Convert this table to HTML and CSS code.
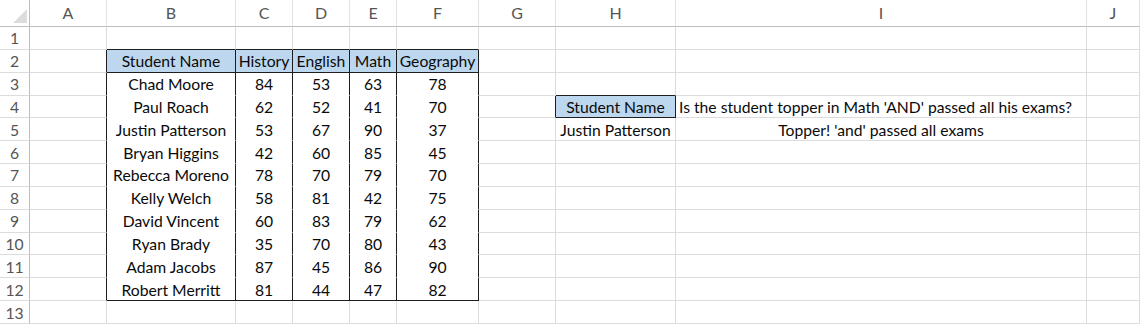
FILE: index.html
```html
<!DOCTYPE html>
<html>
<head>
<meta charset="utf-8">
<link rel="stylesheet" href="styles.css">
</head>
<body>
<div class="sheet">
  <!-- header row -->
  <div class="c ch corner"><span class="tri"></span></div>
  <div class="c ch">A</div>
  <div class="c ch">B</div>
  <div class="c ch">C</div>
  <div class="c ch">D</div>
  <div class="c ch">E</div>
  <div class="c ch">F</div>
  <div class="c ch">G</div>
  <div class="c ch">H</div>
  <div class="c ch">I</div>
  <div class="c ch">J</div>

  <!-- row 1 -->
  <div class="c rh">1</div>
  <div class="c"></div>
  <div class="c bt"></div>
  <div class="c bt"></div>
  <div class="c bt"></div>
  <div class="c bt"></div>
  <div class="c bt"></div>
  <div class="c"></div>
  <div class="c"></div>
  <div class="c"></div>
  <div class="c"></div>

  <!-- row 2 -->
  <div class="c rh">2</div>
  <div class="c br"></div>
  <div class="c br bt hd">Student Name</div>
  <div class="c br bt hd">History</div>
  <div class="c br bt hd">English</div>
  <div class="c br bt hd">Math</div>
  <div class="c br bt hd">Geography</div>
  <div class="c"></div>
  <div class="c"></div>
  <div class="c"></div>
  <div class="c"></div>

  <!-- row 3 -->
  <div class="c rh">3</div>
  <div class="c br"></div>
  <div class="c br nb">Chad Moore</div>
  <div class="c br nb">84</div>
  <div class="c br nb">53</div>
  <div class="c br nb">63</div>
  <div class="c br nb">78</div>
  <div class="c"></div>
  <div class="c bt"></div>
  <div class="c"></div>
  <div class="c"></div>

  <!-- row 4 -->
  <div class="c rh">4</div>
  <div class="c br"></div>
  <div class="c br nb">Paul Roach</div>
  <div class="c br nb">62</div>
  <div class="c br nb">52</div>
  <div class="c br nb">41</div>
  <div class="c br nb">70</div>
  <div class="c br"></div>
  <div class="c br bt hd">Student Name</div>
  <div class="c left">Is the student topper in Math 'AND' passed all his exams?</div>
  <div class="c"></div>

  <!-- row 5 -->
  <div class="c rh">5</div>
  <div class="c br"></div>
  <div class="c br nb">Justin Patterson</div>
  <div class="c br nb">53</div>
  <div class="c br nb">67</div>
  <div class="c br nb">90</div>
  <div class="c br nb">37</div>
  <div class="c"></div>
  <div class="c">Justin Patterson</div>
  <div class="c">Topper! 'and' passed all exams</div>
  <div class="c"></div>

  <!-- row 6 -->
  <div class="c rh">6</div>
  <div class="c br"></div>
  <div class="c br nb">Bryan Higgins</div>
  <div class="c br nb">42</div>
  <div class="c br nb">60</div>
  <div class="c br nb">85</div>
  <div class="c br nb">45</div>
  <div class="c"></div>
  <div class="c"></div>
  <div class="c"></div>
  <div class="c"></div>

  <!-- row 7 -->
  <div class="c rh">7</div>
  <div class="c br"></div>
  <div class="c br nb">Rebecca Moreno</div>
  <div class="c br nb">78</div>
  <div class="c br nb">70</div>
  <div class="c br nb">79</div>
  <div class="c br nb">70</div>
  <div class="c"></div>
  <div class="c"></div>
  <div class="c"></div>
  <div class="c"></div>

  <!-- row 8 -->
  <div class="c rh">8</div>
  <div class="c br"></div>
  <div class="c br nb">Kelly Welch</div>
  <div class="c br nb">58</div>
  <div class="c br nb">81</div>
  <div class="c br nb">42</div>
  <div class="c br nb">75</div>
  <div class="c"></div>
  <div class="c"></div>
  <div class="c"></div>
  <div class="c"></div>

  <!-- row 9 -->
  <div class="c rh">9</div>
  <div class="c br"></div>
  <div class="c br nb">David Vincent</div>
  <div class="c br nb">60</div>
  <div class="c br nb">83</div>
  <div class="c br nb">79</div>
  <div class="c br nb">62</div>
  <div class="c"></div>
  <div class="c"></div>
  <div class="c"></div>
  <div class="c"></div>

  <!-- row 10 -->
  <div class="c rh">10</div>
  <div class="c br"></div>
  <div class="c br nb">Ryan Brady</div>
  <div class="c br nb">35</div>
  <div class="c br nb">70</div>
  <div class="c br nb">80</div>
  <div class="c br nb">43</div>
  <div class="c"></div>
  <div class="c"></div>
  <div class="c"></div>
  <div class="c"></div>

  <!-- row 11 -->
  <div class="c rh">11</div>
  <div class="c br"></div>
  <div class="c br nb">Adam Jacobs</div>
  <div class="c br nb">87</div>
  <div class="c br nb">45</div>
  <div class="c br nb">86</div>
  <div class="c br nb">90</div>
  <div class="c"></div>
  <div class="c"></div>
  <div class="c"></div>
  <div class="c"></div>

  <!-- row 12 -->
  <div class="c rh">12</div>
  <div class="c br"></div>
  <div class="c br bt">Robert Merritt</div>
  <div class="c br bt">81</div>
  <div class="c br bt">44</div>
  <div class="c br bt">47</div>
  <div class="c br bt">82</div>
  <div class="c"></div>
  <div class="c"></div>
  <div class="c"></div>
  <div class="c"></div>

  <!-- row 13 -->
  <div class="c rh">13</div>
  <div class="c"></div>
  <div class="c"></div>
  <div class="c"></div>
  <div class="c"></div>
  <div class="c"></div>
  <div class="c"></div>
  <div class="c"></div>
  <div class="c"></div>
  <div class="c"></div>
  <div class="c"></div>
</div>
</body>
</html>
```

FILE: styles.css
```css
html, body {
  margin: 0;
  padding: 0;
  background: #ffffff;
}

body {
  width: 1140px;
  height: 324px;
  overflow: hidden;
  font-family: Lato, "Liberation Sans", sans-serif;
  font-size: 15.7px;
  color: #0a0a0a;
}

.sheet {
  display: grid;
  grid-template-columns: 30px 77px 129px 57px 57px 47px 82px 77px 120px 411px 53px;
  grid-template-rows: 27px repeat(13, 22.85px);
  width: 1140px;
}

.c {
  box-sizing: border-box;
  display: flex;
  align-items: center;
  justify-content: center;
  padding-top: 1px;
  white-space: nowrap;
  overflow: hidden;
  border-right: 1px solid #dcdcdc;
  border-bottom: 1px solid #dcdcdc;
  background: #ffffff;
}

.ch {
  color: #555555;
  font-size: 16px;
  border-bottom: 1px solid #bdbdbd;
  border-right: 1px solid #e2e2e2;
  padding-top: 0;
  padding-bottom: 2px;
}

.corner {
  position: relative;
  border-right: 1px solid #bdbdbd;
}

.tri {
  position: absolute;
  left: 13px;
  top: 9px;
  width: 14px;
  height: 14px;
  background: #dcdcdc;
  clip-path: polygon(100% 0, 100% 100%, 0 100%);
}

.rh {
  color: #555555;
  border-right: 1px solid #bdbdbd;
}

.bt {
  border-bottom: 1px solid #1e1e1e;
}

.br {
  border-right: 1px solid #1e1e1e;
}

.nb {
  border-bottom-color: #ffffff;
}

.hd {
  background: #bdd7ee;
}

.left {
  justify-content: flex-start;
  padding-left: 3px;
}
```
